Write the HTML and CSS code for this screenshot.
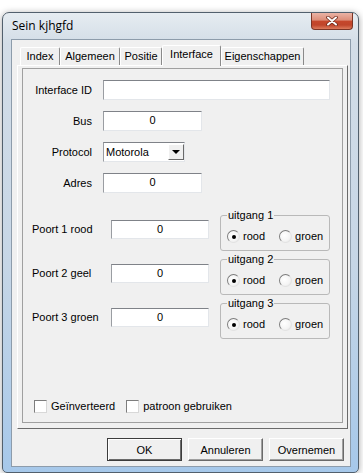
FILE: index.html
```html
<!DOCTYPE html>
<html lang="nl">
<head>
    <meta charset="UTF-8">
    <meta name="viewport" content="width=device-width, initial-scale=1.0">
    <title>Sein kjhgfd</title>
    <link rel="stylesheet" href="styles.css">
</head>
<body>
    <div class="window">
        <div class="titlebar">
            <span class="title">Sein kjhgfd</span>
            <div class="close-btn">
                <svg width="12" height="10" viewBox="0 0 12 10">
                    <path d="M2 1.5 L10 8.5 M10 1.5 L2 8.5" stroke="#6e2a1c" stroke-width="3.6" stroke-linecap="round"/>
                    <path d="M2 1.5 L10 8.5 M10 1.5 L2 8.5" stroke="#ffffff" stroke-width="2" stroke-linecap="round"/>
                </svg>
            </div>
        </div>

        <div class="client">
            <div class="tabs">
                <div class="tab tab-index">Index</div>
                <div class="tab tab-algemeen">Algemeen</div>
                <div class="tab tab-positie">Positie</div>
                <div class="tab tab-interface active">Interface</div>
                <div class="tab tab-eigenschappen">Eigenschappen</div>
            </div>

            <div class="tab-panel">
                <div class="page">
                    <div class="fields">
                        <label class="field-label">Interface ID</label>
                        <div class="edit edit-wide"></div>

                        <label class="field-label">Bus</label>
                        <div class="edit edit-short">0</div>

                        <label class="field-label">Protocol</label>
                        <div class="select">
                            <span class="select-text">Motorola</span>
                            <span class="select-btn"><span class="arrow"></span></span>
                        </div>

                        <label class="field-label">Adres</label>
                        <div class="edit edit-short">0</div>
                    </div>

                    <div class="ports">
                        <div class="port-row">
                            <span class="port-label">Poort 1 rood</span>
                            <div class="edit edit-port">0</div>
                            <div class="group">
                                <span class="legend">uitgang 1</span>
                                <div class="radios">
                                    <span class="radio checked"><span class="dot"></span>rood</span>
                                    <span class="radio"><span class="dot"></span>groen</span>
                                </div>
                            </div>
                        </div>
                        <div class="port-row">
                            <span class="port-label">Poort 2 geel</span>
                            <div class="edit edit-port">0</div>
                            <div class="group">
                                <span class="legend">uitgang 2</span>
                                <div class="radios">
                                    <span class="radio checked"><span class="dot"></span>rood</span>
                                    <span class="radio"><span class="dot"></span>groen</span>
                                </div>
                            </div>
                        </div>
                        <div class="port-row">
                            <span class="port-label">Poort 3 groen</span>
                            <div class="edit edit-port">0</div>
                            <div class="group">
                                <span class="legend">uitgang 3</span>
                                <div class="radios">
                                    <span class="radio checked"><span class="dot"></span>rood</span>
                                    <span class="radio"><span class="dot"></span>groen</span>
                                </div>
                            </div>
                        </div>
                    </div>

                    <div class="checks">
                        <span class="check"><span class="box"></span>Geïnverteerd</span>
                        <span class="check"><span class="box"></span>patroon gebruiken</span>
                    </div>
                </div>
            </div>

            <div class="buttons">
                <button class="btn default">OK</button>
                <button class="btn">Annuleren</button>
                <button class="btn">Overnemen</button>
            </div>
        </div>
    </div>
</body>
</html>
```

FILE: styles.css
```css
* {
    margin: 0;
    padding: 0;
    box-sizing: border-box;
}

body {
    background: #ffffff;
    font-family: 'Liberation Sans', Arial, sans-serif;
    font-size: 11px;
    color: #000;
}

.window {
    margin: 12px 0 0 2px;
    width: 357px;
    height: 461px;
    border: 1px solid #52606d;
    border-radius: 7px 7px 5px 5px;
    padding: 0 7px 5px 8px;
    display: flex;
    flex-direction: column;
    background: linear-gradient(180deg, #e6ecf1 0, #d3dde7 30px, #c6d6e6 55%, #a6c8ea 100%);
    box-shadow: 0 1px 7px rgba(0, 0, 0, 0.35);
}

.titlebar {
    height: 26px;
    display: flex;
    align-items: flex-start;
    justify-content: space-between;
    padding-left: 1px;
}

.title {
    font-family: 'Open Sans', 'Noto Sans', sans-serif;
    font-size: 12px;
    line-height: 26px;
    color: #000;
}

.close-btn {
    width: 42px;
    height: 17px;
    margin-right: -2px;
    border: 1px solid #7b3526;
    border-top: none;
    border-radius: 0 0 4px 4px;
    background: linear-gradient(180deg, #eab3a5 0, #dc8d78 45%, #c6472c 50%, #c0452b 75%, #dd7b5d 100%);
    display: flex;
    align-items: center;
    justify-content: center;
}

.client {
    width: 340px;
    height: 428px;
    border: 1px solid #8d9cab;
    background: #f0f0f0;
    padding: 5px 2px 5px 5px;
    display: flex;
    flex-direction: column;
}

/* tabs */

.tabs {
    height: 20px;
    display: flex;
    align-items: flex-end;
    padding-left: 3px;
}

.tab {
    height: 18px;
    line-height: 17px;
    text-align: center;
    background: #f0f0f0;
    border-top: 1px solid #ffffff;
    border-left: 1px solid #ffffff;
    border-right: 1px solid #8a8a8a;
    border-radius: 2px 2px 0 0;
}

.tab.active {
    height: 21px;
    line-height: 17px;
    margin-bottom: -1px;
    position: relative;
    z-index: 1;
}

.tab-index { width: 40px; }
.tab-algemeen { width: 60px; }
.tab-positie { width: 42px; }
.tab-interface { width: 59px; }
.tab-eigenschappen { width: 83px; }

.tab-panel {
    height: 364px;
    border: 1px solid;
    border-color: #ffffff #6a6a6a #6a6a6a #ffffff;
    padding: 2px 4px 5px 4px;
    display: flex;
}

.page {
    flex: 1;
    border: 1px solid #a0a0a0;
    padding: 11px 0 0 9px;
    display: flex;
    flex-direction: column;
}

/* edit fields */

.fields {
    display: grid;
    grid-template-columns: 60px auto;
    column-gap: 11px;
    row-gap: 11px;
    justify-items: start;
}

.field-label {
    justify-self: end;
    line-height: 20px;
}

.edit {
    height: 20px;
    background: #ffffff;
    border: 1px solid;
    border-color: #7f8288 #e3e6ea #e3e6ea #9a9da2;
    text-align: center;
    line-height: 17px;
}

.edit-wide { width: 227px; }
.edit-short { width: 99px; }
.edit-port { width: 98px; height: 19px; }

.select {
    width: 82px;
    height: 20px;
    background: #ffffff;
    border: 1px solid;
    border-color: #7f8288 #e3e6ea #e3e6ea #9a9da2;
    display: flex;
    align-items: center;
    justify-content: space-between;
}

.select-text {
    padding-left: 2px;
}

.select-btn {
    width: 16px;
    height: 16px;
    margin-right: 0;
    background: #f0f0f0;
    border: 1px solid;
    border-color: #ffffff #6a6a6a #6a6a6a #ffffff;
    display: flex;
    align-items: center;
    justify-content: center;
}

.arrow {
    width: 0;
    height: 0;
    border-left: 4px solid transparent;
    border-right: 4px solid transparent;
    border-top: 4px solid #000;
}

/* port rows */

.ports {
    margin-top: 22px;
}

.port-row {
    display: flex;
    align-items: flex-start;
    height: 36px;
    margin-bottom: 8px;
}

.port-label {
    width: 79px;
    margin-top: 5px;
    line-height: 19px;
}

.edit-port {
    margin-top: 5px;
}

.group {
    position: relative;
    width: 110px;
    height: 36px;
    margin-left: 11px;
    border: 1px solid #b9b9b9;
    border-radius: 3px;
    padding: 14px 0 0 6px;
}

.legend {
    position: absolute;
    top: -7px;
    left: 6px;
    padding: 0 1px;
    line-height: 13px;
    background: #f0f0f0;
}

.radios {
    display: flex;
    align-items: center;
    height: 13px;
}

.radio {
    display: inline-flex;
    align-items: center;
    line-height: 13px;
}

.radio + .radio {
    margin-left: 14px;
}

.radio .dot {
    width: 13px;
    height: 13px;
    margin-right: 3px;
    border-radius: 50%;
    border: 1px solid;
    border-color: #7d7d7d #e2e2e2 #e2e2e2 #7d7d7d;
    background: radial-gradient(circle at 40% 40%, #ffffff 0, #f4f4f4 60%, #dcdcdc 100%);
    display: flex;
    align-items: center;
    justify-content: center;
}

.radio.checked .dot::after {
    content: "";
    width: 4px;
    height: 4px;
    border-radius: 50%;
    background: #000;
}

/* checkboxes */

.checks {
    margin-top: auto;
    padding: 0 0 9px 2px;
    display: flex;
    align-items: center;
}

.check {
    display: inline-flex;
    align-items: center;
    line-height: 13px;
}

.check + .check {
    margin-left: 11px;
}

.check .box {
    width: 13px;
    height: 13px;
    margin-right: 4px;
    background: #ffffff;
    border: 1px solid;
    border-color: #7d7d7d #d8d8d8 #d8d8d8 #7d7d7d;
}

/* dialog buttons */

.buttons {
    margin-top: 9px;
    padding-right: 4px;
    display: flex;
    justify-content: flex-end;
    gap: 6px;
}

.btn {
    width: 75px;
    height: 23px;
    font-family: 'Liberation Sans', Arial, sans-serif;
    font-size: 11px;
    color: #000;
    background: #f0f0f0;
    border: 1px solid;
    border-color: #ffffff #6a6a6a #6a6a6a #ffffff;
    box-shadow: inset -1px -1px 0 #a0a0a0;
}

.btn.default {
    border-color: #3c3c3c;
    box-shadow: inset 1px 1px 0 #ffffff, inset -1px -1px 0 #6a6a6a;
}
```
